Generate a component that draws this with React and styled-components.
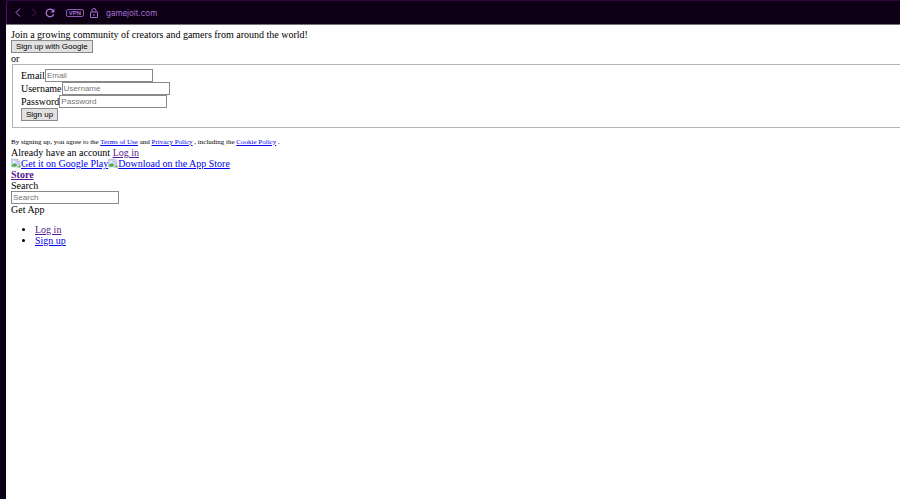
import React from "react";
import styled, { createGlobalStyle } from "styled-components";

const GlobalStyle = createGlobalStyle`
  * {
    box-sizing: border-box;
  }

  body {
    margin: 0;
    background: #0d0014;
  }
`;

const Browser = styled.div`
  min-height: 100vh;
  display: flex;
  flex-direction: column;
  padding-left: 6px;
  background: #0d0014;
`;

const Toolbar = styled.header`
  display: flex;
  align-items: center;
  height: 24px;
  padding: 0 3px;
  border-top: 1px solid #2c0742;
  border-left: 1px solid #4a0f70;
  border-top-left-radius: 3px;
  color: #a970d4;
`;

const NavButton = styled.button`
  display: flex;
  width: 16px;
  height: 16px;
  align-items: center;
  justify-content: center;
  padding: 0;
  border: 0;
  background: none;
  color: ${(props) => (props.disabled ? "#46225c" : "#b27be0")};
`;

const Badges = styled.div`
  display: flex;
  align-items: center;
  gap: 6px;
  margin: 0 8px;
`;

const Address = styled.span`
  font-family: Inter, sans-serif;
  font-size: 8px;
  line-height: 12px;
`;

const Page = styled.main`
  flex: 1;
  padding: 4px 5px;
  overflow: hidden;
  border-top: 1px solid #77717b;
  background: #ffffff;
  color: #000000;
  font-family: "Liberation Serif", serif;
  font-size: 10px;
  line-height: 11px;
`;

const Row = styled.div`
  display: flex;
  align-items: center;
`;

const Button = styled.button`
  display: block;
  height: 13px;
  padding: 0 4px;
  border: 1px solid #8a8a8a;
  border-radius: 0;
  background: #e1e1e1;
  color: #000000;
  font-family: "Liberation Sans", sans-serif;
  font-size: 8px;
  line-height: 11px;
`;

const TextInput = styled.input`
  display: block;
  width: 108px;
  height: 13px;
  padding: 0 1px;
  border: 1px solid #8a8a8a;
  border-radius: 0;
  background: #ffffff;
  font-family: "Liberation Sans", sans-serif;
  font-size: 8px;

  &::placeholder {
    color: #757575;
    opacity: 1;
  }
`;

const Fields = styled.fieldset`
  margin: 0 -5px 0 1px;
  padding: 4px 8px 6px;
  border: 1px solid #b4b4b4;
  border-right: 0;
`;

const Link = styled.a`
  color: ${(props) => (props.$visited ? "#551a8b" : "#0000ee")};
  font-weight: ${(props) => (props.$bold ? "bold" : "normal")};
  text-decoration: underline;
`;

const Terms = styled.p`
  margin: 9px 0 0;
  font-size: 7px;
  line-height: 10px;
`;

const Menu = styled.ul`
  margin: 9px 0;
  padding-left: 24px;
`;

const BrokenImage = styled.svg`
  width: 10px;
  height: 10px;
  vertical-align: top;
`;

const MissingPicture = () => (
  <BrokenImage viewBox="0 0 10 10" aria-hidden="true">
    <path d="M.5 1h6L9 3.5V6L5.5 9H.5z" fill="#c2d3f5" stroke="#b5bccb" strokeWidth=".6" />
    <path d="M6.5 1v2.5H9z" fill="#ffffff" stroke="#a9afbd" strokeWidth=".5" />
    <path d="M2 4c0-1.2 1.6-1.2 1.8-.5 1 0 1 1.2 0 1.2H2z" fill="#ffffff" />
    <path d="M1 8.6V7.4C2.6 5 4.6 5.2 6 7L4.8 8.6z" fill="#4fae3c" />
    <path d="M9.5 6.4v3H6z" fill="#4fae3c" />
  </BrokenImage>
);

const Chevron = ({ forward }) => (
  <svg width="6" height="9" viewBox="0 0 6 9" fill="none" stroke="currentColor">
    <path d={forward ? "M1 .5l4 4-4 4" : "M5 .5l-4 4 4 4"} />
  </svg>
);

const Reload = () => (
  <svg width="10" height="10" viewBox="0 0 10 10" fill="none" stroke="currentColor">
    <path d="M8.6 6.2A3.8 3.8 0 1 1 7.8 2.4" strokeWidth="1.2" />
    <path d="M9.4.6v3.8H5.6z" fill="currentColor" stroke="none" />
  </svg>
);

const VpnBadge = styled.span`
  width: 18px;
  height: 8px;
  border: 1px solid #8d58b0;
  border-radius: 2px;
  font-family: "Liberation Sans", sans-serif;
  font-size: 6px;
  font-weight: bold;
  line-height: 6px;
  text-align: center;
`;

const Lock = () => (
  <svg width="8" height="10" viewBox="0 0 8 10" fill="none" stroke="currentColor">
    <path d="M2 4V2.5a2 2 0 0 1 4 0V4" />
    <rect x=".5" y="4" width="7" height="5.5" rx=".5" />
    <path d="M4 6v2" />
  </svg>
);

const Field = ({ id, label, type = "text" }) => (
  <Row>
    <label htmlFor={id}>{label}</label>
    <TextInput id={id} type={type} placeholder={label} />
  </Row>
);

const App = () => {
  return (
    <Browser>
      <GlobalStyle />
      <Toolbar>
        <NavButton aria-label="Back">
          <Chevron />
        </NavButton>
        <NavButton aria-label="Forward" disabled>
          <Chevron forward />
        </NavButton>
        <NavButton aria-label="Reload">
          <Reload />
        </NavButton>
        <Badges>
          <VpnBadge>VPN</VpnBadge>
          <Lock />
        </Badges>
        <Address>gamejolt.com</Address>
      </Toolbar>

      <Page>
        <div>
          Join a growing community of creators and gamers from around the world!
        </div>
        <Button type="button">Sign up with Google</Button>
        <div>or</div>
        <form>
          <Fields>
            <Field id="email" label="Email" type="email" />
            <Field id="username" label="Username" />
            <Field id="password" label="Password" type="password" />
            <Button type="button">Sign up</Button>
          </Fields>
        </form>
        <Terms>
          By signing up, you agree to the <Link href="#terms">Terms of Use</Link>{" "}
          and <Link href="#privacy">Privacy Policy</Link> , including the{" "}
          <Link href="#cookies">Cookie Policy</Link> .
        </Terms>
        <div>
          Already have an account{" "}
          <Link href="#login" $visited>
            Log in
          </Link>
        </div>
        <div>
          <Link href="#android">
            <MissingPicture />
            Get it on Google Play
          </Link>
          <Link href="#ios">
            <MissingPicture />
            Download on the App Store
          </Link>
        </div>
        <div>
          <Link href="#store" $visited $bold>
            Store
          </Link>
        </div>
        <label htmlFor="search">Search</label>
        <TextInput id="search" type="search" placeholder="Search" />
        <div>Get App</div>
        <Menu>
          <li>
            <Link href="#login" $visited>
              Log in
            </Link>
          </li>
          <li>
            <Link href="#signup">Sign up</Link>
          </li>
        </Menu>
      </Page>
    </Browser>
  );
};

export default App;
